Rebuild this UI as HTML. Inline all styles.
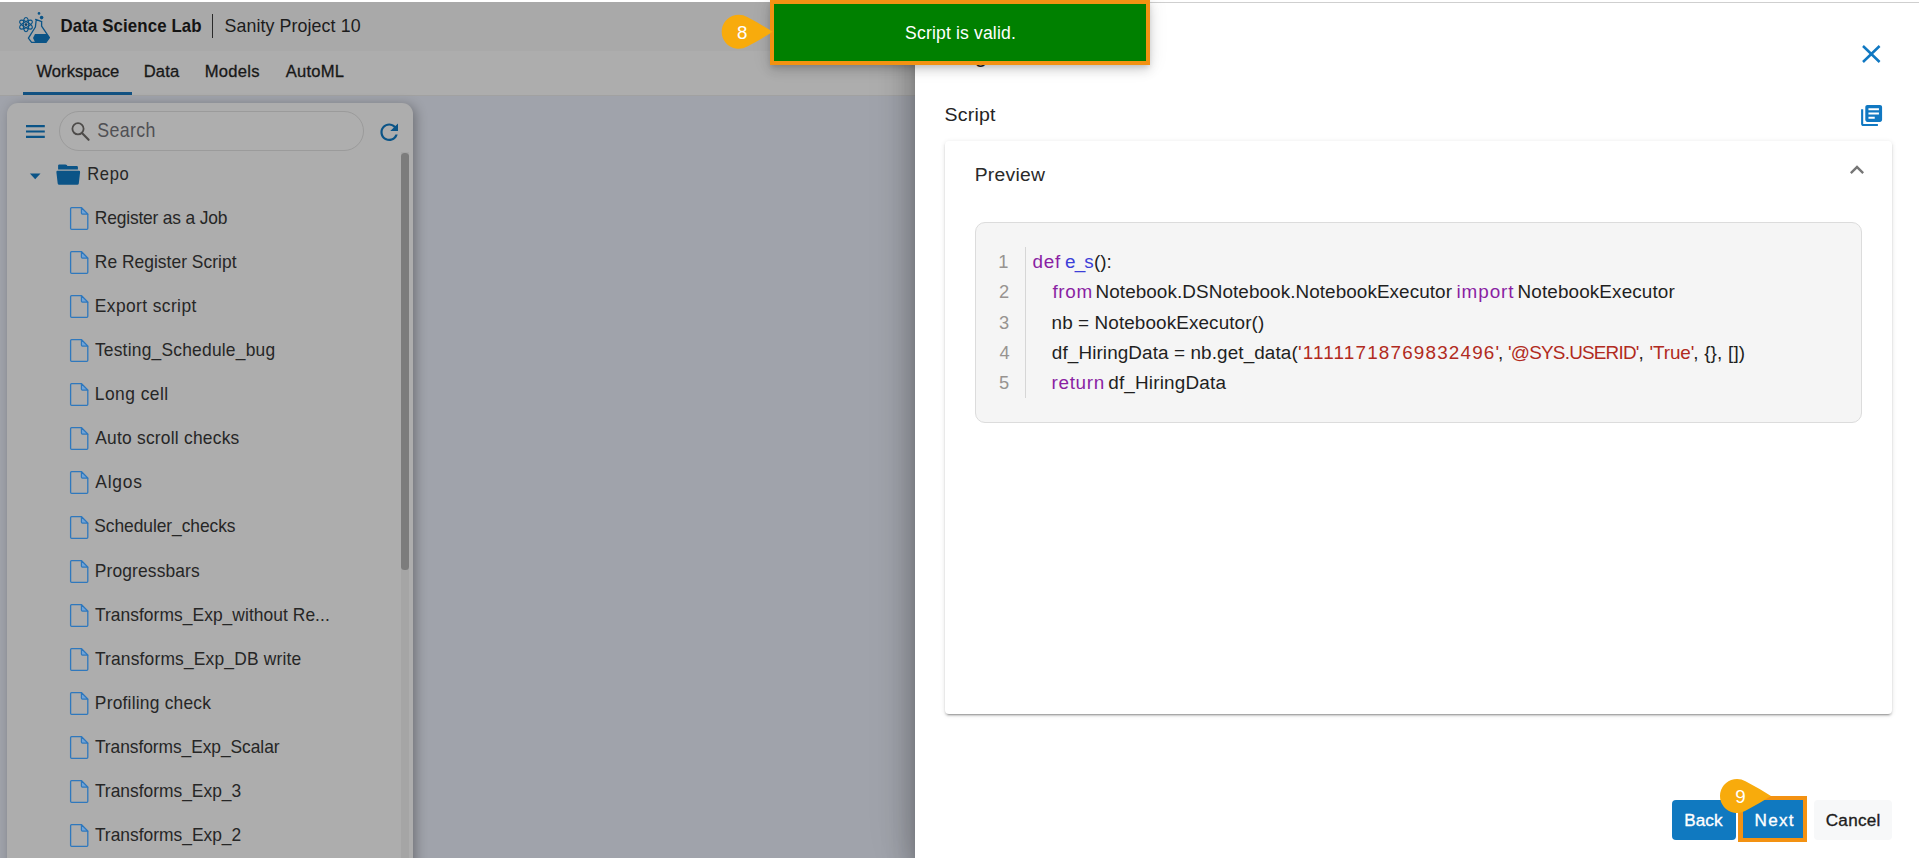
<!DOCTYPE html>
<html lang="en">
<head>
<meta charset="utf-8">
<title>Data Science Lab</title>
<style>
*{box-sizing:border-box;margin:0;padding:0}
html,body{width:1919px;height:858px;overflow:hidden;background:#9fa3ab;font-family:"Liberation Sans",Arial,sans-serif;color:#222}
.abs{position:absolute}
svg{position:absolute;overflow:visible}
.t{position:absolute;white-space:pre;line-height:1;transform-origin:0 84.7%}
.sb{-webkit-text-stroke:0.3px #181818}
.sw{-webkit-text-stroke:0.35px #fff}
.sk{-webkit-text-stroke:0.35px #1d1d1d}
#topline{left:0;top:0;width:1919px;height:2px;background:#fff}
#topline2{left:1150px;top:2px;width:769px;height:1px;background:#cfcfcf}
#hdr{left:0;top:2px;width:915px;height:49px;background:#a9a9a9}
#tabs{left:0;top:51px;width:915px;height:45px;background:#adadad;border-bottom:1px solid #a1a1a1}
#tabline{left:23px;top:92px;width:109px;height:3px;background:#125283}
#sep{left:211.5px;top:13.5px;width:1.5px;height:24px;background:#2a2a2a}
#main{left:0;top:96px;width:915px;height:762px;background:#a0a3ab}
#side{left:7px;top:103px;width:406px;height:770px;background:#adadad;border-radius:11px;box-shadow:3px 2px 12px rgba(0,0,0,.3)}
#search{left:59px;top:111px;width:305px;height:40px;border:1px solid #9b9b9b;border-radius:20px;background:#aeaeae}
#sbtrack{left:401px;top:152px;width:8px;height:706px;background:#a5a5a5}
#sbthumb{left:401px;top:152.5px;width:8px;height:417.2px;background:#7c7c7c;border-radius:3.5px}
#panel{left:915px;top:0;width:1004px;height:858px;background:#fff;box-shadow:0 8px 10px -5px rgba(0,0,0,.2),0 16px 24px 2px rgba(0,0,0,.14),0 6px 30px 5px rgba(0,0,0,.14),0 0 50px rgba(0,0,0,.1)}
#card{left:945px;top:140.6px;width:947.4px;height:573.2px;background:#fff;border-radius:4px;box-shadow:0 3px 1px -2px rgba(0,0,0,.2),0 2px 2px rgba(0,0,0,.14),0 1px 5px rgba(0,0,0,.12)}
#code{left:975px;top:222px;width:887px;height:201px;background:#f5f5f5;border:1px solid #dcdcdc;border-radius:10px}
#gut{left:1025px;top:247px;width:1px;height:151px;background:#d6d6d6}
#toastb{left:770px;top:-1px;width:380px;height:66px;background:#f39212;box-shadow:0 3px 5px -1px rgba(0,0,0,.12),0 6px 10px rgba(0,0,0,.10),0 1px 18px rgba(0,0,0,.10)}
#toastg{left:774px;top:4px;width:372px;height:57px;background:#008000}
#bback{left:1672px;top:800px;width:63.5px;height:40px;border-radius:4px;background:#1079c0}
#bnexto{left:1738px;top:796px;width:69px;height:45.5px;background:#f39212}
#bnext{left:1742.5px;top:800.3px;width:60.5px;height:37.4px;background:#1079c0}
#bcancel{left:1813.7px;top:800px;width:78.3px;height:40px;border-radius:4px;background:#f7f8f9}
</style>
</head>
<body>
<div class="abs" id="hdr"></div>
<div class="abs" id="tabs"></div>
<div class="abs" id="tabline"></div>
<div class="abs" id="sep"></div>
<div class="abs" id="main"></div>
<div class="abs" id="side"></div>
<div class="abs" id="search"></div>
<div class="abs" id="sbtrack"></div>
<div class="abs" id="sbthumb"></div>
<svg id="logo" style="left:0;top:0" width="60" height="50" viewBox="0 0 60 50">
<g fill="none" stroke="#0b5487" stroke-width="1.15">
<ellipse cx="26" cy="24.6" rx="2.7" ry="7.1"/>
<ellipse cx="26" cy="24.6" rx="2.7" ry="7.1" transform="rotate(60 26 24.6)"/>
<ellipse cx="26" cy="24.6" rx="2.7" ry="7.1" transform="rotate(-60 26 24.6)"/>
</g>
<circle cx="26" cy="24.6" r="1.4" fill="#0a3f68"/>
<circle cx="39" cy="13.4" r="1.3" fill="#0b5487"/>
<circle cx="41.6" cy="17.6" r="1.8" fill="#0b5487"/>
<path d="M35.6 19.4 L41.8 21.6 M36.2 19.8 L35.4 27 L28.4 38.2 L31.6 42.4 L46 42.4 L49.4 37.6 L41.6 26.2 L41.6 21.8" fill="none" stroke="#0b5487" stroke-width="1.3" stroke-linejoin="round" stroke-linecap="round"/>
<path d="M35 34 L47 34 L49.4 37.6 L46 42.4 L35.2 42.4 L33 38 Z" fill="#0b5487"/>
</svg>
<svg style="left:25.8px;top:125.4px" width="18.8" height="13" viewBox="0 0 18.8 13"><path d="M0 1.1h18.8M0 6.5h18.8M0 11.9h18.8" stroke="#0b5487" stroke-width="2.2" fill="none"/></svg>
<svg style="left:70px;top:121px" width="22" height="22" viewBox="0 0 22 22"><circle cx="8" cy="7.8" r="5.6" fill="none" stroke="#4d4b49" stroke-width="1.8"/><path d="M12.2 12.2L18.6 18.8" stroke="#4d4b49" stroke-width="2.1" stroke-linecap="round"/></svg>
<svg style="left:375.6px;top:119.2px" width="26.4" height="26.4" viewBox="0 0 24 24"><path fill="#0b5487" d="M17.65 6.35C16.2 4.9 14.21 4 12 4c-4.42 0-7.99 3.58-7.99 8s3.57 8 7.99 8c3.73 0 6.84-2.55 7.73-6h-2.08c-.82 2.33-3.04 4-5.65 4-3.31 0-6-2.69-6-6s2.69-6 6-6c1.66 0 3.14.69 4.22 1.78L13 11h7V4l-2.35 2.35z"/></svg>
<svg style="left:0;top:0" width="60" height="200" viewBox="0 0 60 200"><path d="M29.9 173.6H40.5L35.2 179.2Z" fill="#0b5487"/></svg>
<svg style="left:0;top:0" width="100" height="200" viewBox="0 0 100 200"><path fill="#0b5487" d="M58.1 165.6q0-1.2 1.2-1.2h6q1 0 1.5.7l.6.8h9.3q1.2 0 1.2 1.2v2.3H58.1Z"/>
<path fill="#0b5487" d="M57.6 170.8h21.3q1.4 0 1.2 1.4l-1.3 11.2q-.2 1.3-1.5 1.3H59.2q-1.3 0-1.5-1.3l-1.3-11.2q-.2-1.4 1.2-1.4Z"/></svg>
<svg style="left:70.4px;top:207.0px" width="18.5" height="23" viewBox="0 0 18.5 23"><path d="M1.6 .7H11.4L17.8 7.1V21.3q0 1-1 1H1.6q-1 0-1-1V1.7q0-1 1-1Z" fill="none" stroke="#2f78bd" stroke-width="1.3" stroke-linejoin="round"/><path d="M11.4 .7V6.1q0 1 1 1H17.8Z" fill="#6fa3d8" stroke="#2f78bd" stroke-width="1.2" stroke-linejoin="round"/></svg>
<svg style="left:70.4px;top:251.1px" width="18.5" height="23" viewBox="0 0 18.5 23"><path d="M1.6 .7H11.4L17.8 7.1V21.3q0 1-1 1H1.6q-1 0-1-1V1.7q0-1 1-1Z" fill="none" stroke="#2f78bd" stroke-width="1.3" stroke-linejoin="round"/><path d="M11.4 .7V6.1q0 1 1 1H17.8Z" fill="#6fa3d8" stroke="#2f78bd" stroke-width="1.2" stroke-linejoin="round"/></svg>
<svg style="left:70.4px;top:295.1px" width="18.5" height="23" viewBox="0 0 18.5 23"><path d="M1.6 .7H11.4L17.8 7.1V21.3q0 1-1 1H1.6q-1 0-1-1V1.7q0-1 1-1Z" fill="none" stroke="#2f78bd" stroke-width="1.3" stroke-linejoin="round"/><path d="M11.4 .7V6.1q0 1 1 1H17.8Z" fill="#6fa3d8" stroke="#2f78bd" stroke-width="1.2" stroke-linejoin="round"/></svg>
<svg style="left:70.4px;top:339.2px" width="18.5" height="23" viewBox="0 0 18.5 23"><path d="M1.6 .7H11.4L17.8 7.1V21.3q0 1-1 1H1.6q-1 0-1-1V1.7q0-1 1-1Z" fill="none" stroke="#2f78bd" stroke-width="1.3" stroke-linejoin="round"/><path d="M11.4 .7V6.1q0 1 1 1H17.8Z" fill="#6fa3d8" stroke="#2f78bd" stroke-width="1.2" stroke-linejoin="round"/></svg>
<svg style="left:70.4px;top:383.3px" width="18.5" height="23" viewBox="0 0 18.5 23"><path d="M1.6 .7H11.4L17.8 7.1V21.3q0 1-1 1H1.6q-1 0-1-1V1.7q0-1 1-1Z" fill="none" stroke="#2f78bd" stroke-width="1.3" stroke-linejoin="round"/><path d="M11.4 .7V6.1q0 1 1 1H17.8Z" fill="#6fa3d8" stroke="#2f78bd" stroke-width="1.2" stroke-linejoin="round"/></svg>
<svg style="left:70.4px;top:427.4px" width="18.5" height="23" viewBox="0 0 18.5 23"><path d="M1.6 .7H11.4L17.8 7.1V21.3q0 1-1 1H1.6q-1 0-1-1V1.7q0-1 1-1Z" fill="none" stroke="#2f78bd" stroke-width="1.3" stroke-linejoin="round"/><path d="M11.4 .7V6.1q0 1 1 1H17.8Z" fill="#6fa3d8" stroke="#2f78bd" stroke-width="1.2" stroke-linejoin="round"/></svg>
<svg style="left:70.4px;top:471.4px" width="18.5" height="23" viewBox="0 0 18.5 23"><path d="M1.6 .7H11.4L17.8 7.1V21.3q0 1-1 1H1.6q-1 0-1-1V1.7q0-1 1-1Z" fill="none" stroke="#2f78bd" stroke-width="1.3" stroke-linejoin="round"/><path d="M11.4 .7V6.1q0 1 1 1H17.8Z" fill="#6fa3d8" stroke="#2f78bd" stroke-width="1.2" stroke-linejoin="round"/></svg>
<svg style="left:70.4px;top:515.5px" width="18.5" height="23" viewBox="0 0 18.5 23"><path d="M1.6 .7H11.4L17.8 7.1V21.3q0 1-1 1H1.6q-1 0-1-1V1.7q0-1 1-1Z" fill="none" stroke="#2f78bd" stroke-width="1.3" stroke-linejoin="round"/><path d="M11.4 .7V6.1q0 1 1 1H17.8Z" fill="#6fa3d8" stroke="#2f78bd" stroke-width="1.2" stroke-linejoin="round"/></svg>
<svg style="left:70.4px;top:559.6px" width="18.5" height="23" viewBox="0 0 18.5 23"><path d="M1.6 .7H11.4L17.8 7.1V21.3q0 1-1 1H1.6q-1 0-1-1V1.7q0-1 1-1Z" fill="none" stroke="#2f78bd" stroke-width="1.3" stroke-linejoin="round"/><path d="M11.4 .7V6.1q0 1 1 1H17.8Z" fill="#6fa3d8" stroke="#2f78bd" stroke-width="1.2" stroke-linejoin="round"/></svg>
<svg style="left:70.4px;top:603.6px" width="18.5" height="23" viewBox="0 0 18.5 23"><path d="M1.6 .7H11.4L17.8 7.1V21.3q0 1-1 1H1.6q-1 0-1-1V1.7q0-1 1-1Z" fill="none" stroke="#2f78bd" stroke-width="1.3" stroke-linejoin="round"/><path d="M11.4 .7V6.1q0 1 1 1H17.8Z" fill="#6fa3d8" stroke="#2f78bd" stroke-width="1.2" stroke-linejoin="round"/></svg>
<svg style="left:70.4px;top:647.7px" width="18.5" height="23" viewBox="0 0 18.5 23"><path d="M1.6 .7H11.4L17.8 7.1V21.3q0 1-1 1H1.6q-1 0-1-1V1.7q0-1 1-1Z" fill="none" stroke="#2f78bd" stroke-width="1.3" stroke-linejoin="round"/><path d="M11.4 .7V6.1q0 1 1 1H17.8Z" fill="#6fa3d8" stroke="#2f78bd" stroke-width="1.2" stroke-linejoin="round"/></svg>
<svg style="left:70.4px;top:691.8px" width="18.5" height="23" viewBox="0 0 18.5 23"><path d="M1.6 .7H11.4L17.8 7.1V21.3q0 1-1 1H1.6q-1 0-1-1V1.7q0-1 1-1Z" fill="none" stroke="#2f78bd" stroke-width="1.3" stroke-linejoin="round"/><path d="M11.4 .7V6.1q0 1 1 1H17.8Z" fill="#6fa3d8" stroke="#2f78bd" stroke-width="1.2" stroke-linejoin="round"/></svg>
<svg style="left:70.4px;top:735.8px" width="18.5" height="23" viewBox="0 0 18.5 23"><path d="M1.6 .7H11.4L17.8 7.1V21.3q0 1-1 1H1.6q-1 0-1-1V1.7q0-1 1-1Z" fill="none" stroke="#2f78bd" stroke-width="1.3" stroke-linejoin="round"/><path d="M11.4 .7V6.1q0 1 1 1H17.8Z" fill="#6fa3d8" stroke="#2f78bd" stroke-width="1.2" stroke-linejoin="round"/></svg>
<svg style="left:70.4px;top:779.9px" width="18.5" height="23" viewBox="0 0 18.5 23"><path d="M1.6 .7H11.4L17.8 7.1V21.3q0 1-1 1H1.6q-1 0-1-1V1.7q0-1 1-1Z" fill="none" stroke="#2f78bd" stroke-width="1.3" stroke-linejoin="round"/><path d="M11.4 .7V6.1q0 1 1 1H17.8Z" fill="#6fa3d8" stroke="#2f78bd" stroke-width="1.2" stroke-linejoin="round"/></svg>
<svg style="left:70.4px;top:824.0px" width="18.5" height="23" viewBox="0 0 18.5 23"><path d="M1.6 .7H11.4L17.8 7.1V21.3q0 1-1 1H1.6q-1 0-1-1V1.7q0-1 1-1Z" fill="none" stroke="#2f78bd" stroke-width="1.3" stroke-linejoin="round"/><path d="M11.4 .7V6.1q0 1 1 1H17.8Z" fill="#6fa3d8" stroke="#2f78bd" stroke-width="1.2" stroke-linejoin="round"/></svg>
<div class="abs" id="panel"></div>
<div class="abs" id="topline"></div>
<div class="abs" id="topline2"></div>
<div class="abs" id="card"></div>
<div class="abs" id="code"></div>
<div class="abs" id="gut"></div>
<div class="abs" id="bback"></div>
<div class="abs" id="bnexto"></div>
<div class="abs" id="bnext"></div>
<div class="abs" id="bcancel"></div>
<div class="t " id="title" style="left:945.00px;top:42.52px;font-size:23.00px;font-weight:normal;color:#222;letter-spacing:0.000px;transform:scaleY(1.0111)">Register</div>
<div class="abs" id="toastb"></div>
<div class="abs" id="toastg"></div>
<svg style="left:1862.4px;top:45px" width="18.6" height="18" viewBox="0 0 18.6 18"><path d="M1 1L17.6 17M17.6 1L1 17" stroke="#1078c2" stroke-width="2.5" fill="none"/></svg>
<svg style="left:1858.9px;top:102.9px" width="25.2" height="25.2" viewBox="0 0 24 24"><path fill="#1078c2" d="M4 6H2v14c0 1.1.9 2 2 2h14v-2H4V6zm16-4H8c-1.1 0-2 .9-2 2v12c0 1.1.9 2 2 2h12c1.1 0 2-.9 2-2V4c0-1.1-.9-2-2-2zm-1 9H9V9h10v2zm-4 4H9v-2h6v2zm4-8H9V5h10v2z"/></svg>
<svg style="left:1843px;top:155.7px" width="28" height="28" viewBox="0 0 24 24"><path fill="#767676" d="M12 8l-6 6 1.41 1.41L12 10.83l4.59 4.58L18 14z"/></svg>
<svg style="left:0;top:0" width="1919" height="858" viewBox="0 0 1919 858"><path fill="#f8ab0c" d="M747.20 17.08 A17 17 0 1 0 747.20 46.52 Q761.65 38.94 772.70 31.80 Q761.65 24.66 747.20 17.08 Z"/></svg>
<svg style="left:0;top:0" width="1919" height="858" viewBox="0 0 1919 858"><path fill="#f8ab0c" d="M1745.50 781.28 A17 17 0 1 0 1745.50 810.72 Q1759.95 803.14 1771.00 796.00 Q1759.95 788.86 1745.50 781.28 Z"/></svg>
<div class="t " id="h1" style="left:60.43px;top:19.13px;font-size:16.85px;font-weight:bold;color:#141414;letter-spacing:0.115px;transform:scaleY(1.1298)">Data Science Lab</div>
<div class="t " id="h2" style="left:224.50px;top:17.59px;font-size:17.81px;font-weight:normal;color:#1c1c1c;letter-spacing:0.095px;transform:scaleY(1.0689)">Sanity Project 10</div>
<div class="t sb" id="tb1" style="left:36.50px;top:63.94px;font-size:16.58px;font-weight:normal;color:#181818;letter-spacing:0.015px;transform:scaleY(0.9545)">Workspace</div>
<div class="t sb" id="tb2" style="left:143.65px;top:63.94px;font-size:16.58px;font-weight:normal;color:#181818;letter-spacing:0.193px;transform:scaleY(0.9545)">Data</div>
<div class="t sb" id="tb3" style="left:204.65px;top:63.94px;font-size:16.58px;font-weight:normal;color:#181818;letter-spacing:0.296px;transform:scaleY(0.9545)">Models</div>
<div class="t sb" id="tb4" style="left:285.80px;top:63.94px;font-size:16.58px;font-weight:normal;color:#181818;letter-spacing:0.211px;transform:scaleY(0.9545)">AutoML</div>
<div class="t " id="srch" style="left:97.15px;top:123.23px;font-size:17.77px;font-weight:normal;color:#505054;letter-spacing:0.402px;transform:scaleY(1.0889)">Search</div>
<div class="t " id="repo" style="left:87.23px;top:166.54px;font-size:16.57px;font-weight:normal;color:#262626;letter-spacing:0.644px;transform:scaleY(1.1231)">Repo</div>
<div class="t " id="r0" style="left:94.82px;top:210.16px;font-size:17.40px;font-weight:normal;color:#262626;letter-spacing:-0.170px;transform:scaleY(1.0690)">Register as a Job</div>
<div class="t " id="r1" style="left:94.82px;top:254.30px;font-size:17.40px;font-weight:normal;color:#262626;letter-spacing:0.033px;transform:scaleY(1.0690)">Re Register Script</div>
<div class="t " id="r2" style="left:94.82px;top:298.44px;font-size:17.40px;font-weight:normal;color:#262626;letter-spacing:0.403px;transform:scaleY(1.0690)">Export script</div>
<div class="t " id="r3" style="left:94.89px;top:341.79px;font-size:17.40px;font-weight:normal;color:#262626;letter-spacing:0.225px;transform:scaleY(1.0690)">Testing_Schedule_bug</div>
<div class="t " id="r4" style="left:94.82px;top:386.00px;font-size:17.40px;font-weight:normal;color:#262626;letter-spacing:0.467px;transform:scaleY(1.0690)">Long cell</div>
<div class="t " id="r5" style="left:95.20px;top:429.51px;font-size:17.40px;font-weight:normal;color:#262626;letter-spacing:0.231px;transform:scaleY(1.0690)">Auto scroll checks</div>
<div class="t " id="r6" style="left:95.20px;top:473.58px;font-size:17.40px;font-weight:normal;color:#262626;letter-spacing:0.840px;transform:scaleY(1.0690)">Algos</div>
<div class="t " id="r7" style="left:94.33px;top:517.65px;font-size:17.40px;font-weight:normal;color:#262626;letter-spacing:-0.062px;transform:scaleY(1.0690)">Scheduler_checks</div>
<div class="t " id="r8" style="left:94.82px;top:562.84px;font-size:17.40px;font-weight:normal;color:#262626;letter-spacing:0.134px;transform:scaleY(1.0690)">Progressbars</div>
<div class="t " id="r9" style="left:94.89px;top:607.05px;font-size:17.40px;font-weight:normal;color:#262626;letter-spacing:0.059px;transform:scaleY(1.0690)">Transforms_Exp_without Re...</div>
<div class="t " id="r10" style="left:94.89px;top:650.56px;font-size:17.40px;font-weight:normal;color:#262626;letter-spacing:0.181px;transform:scaleY(1.0690)">Transforms_Exp_DB write</div>
<div class="t " id="r11" style="left:94.82px;top:694.70px;font-size:17.40px;font-weight:normal;color:#262626;letter-spacing:0.218px;transform:scaleY(1.0690)">Profiling check</div>
<div class="t " id="r12" style="left:94.89px;top:738.84px;font-size:17.40px;font-weight:normal;color:#262626;letter-spacing:-0.060px;transform:scaleY(1.0690)">Transforms_Exp_Scalar</div>
<div class="t " id="r13" style="left:94.89px;top:782.98px;font-size:17.40px;font-weight:normal;color:#262626;letter-spacing:0.001px;transform:scaleY(1.0690)">Transforms_Exp_3</div>
<div class="t " id="r14" style="left:94.89px;top:827.12px;font-size:17.40px;font-weight:normal;color:#262626;letter-spacing:0.005px;transform:scaleY(1.0690)">Transforms_Exp_2</div>
<div class="t " id="toast" style="left:905.12px;top:24.81px;font-size:17.57px;font-weight:normal;color:#fff;letter-spacing:0.155px;transform:scaleY(1.0669)">Script is valid.</div>
<div class="t " id="b8" style="left:736.96px;top:23.68px;font-size:18.75px;font-weight:normal;color:#fff;letter-spacing:0.000px;transform:scaleY(1.0000)">8</div>
<div class="t " id="b9" style="left:1735.15px;top:787.98px;font-size:18.75px;font-weight:normal;color:#fff;letter-spacing:0.000px;transform:scaleY(1.0000)">9</div>
<div class="t " id="script" style="left:944.62px;top:105.47px;font-size:19.53px;font-weight:normal;color:#242424;letter-spacing:0.193px;transform:scaleY(0.9675)">Script</div>
<div class="t " id="preview" style="left:974.72px;top:164.86px;font-size:19.32px;font-weight:normal;color:#2a2a2a;letter-spacing:0.272px;transform:scaleY(0.9587)">Preview</div>
<div class="t " id="ln0" style="left:998.21px;top:252.59px;font-size:18.31px;font-weight:normal;color:#979390;letter-spacing:0.000px;transform:scaleY(1.0000)">1</div>
<div class="t " id="ln1" style="left:998.99px;top:282.79px;font-size:18.31px;font-weight:normal;color:#979390;letter-spacing:0.000px;transform:scaleY(1.0000)">2</div>
<div class="t " id="ln2" style="left:999.01px;top:313.54px;font-size:18.31px;font-weight:normal;color:#979390;letter-spacing:0.000px;transform:scaleY(1.0000)">3</div>
<div class="t " id="ln3" style="left:999.60px;top:343.94px;font-size:18.31px;font-weight:normal;color:#979390;letter-spacing:0.000px;transform:scaleY(1.0000)">4</div>
<div class="t " id="ln4" style="left:998.99px;top:374.34px;font-size:18.31px;font-weight:normal;color:#979390;letter-spacing:0.000px;transform:scaleY(1.0000)">5</div>
<div class="t " id="c1a" style="left:1032.62px;top:253.22px;font-size:18.90px;font-weight:normal;color:#8a1fa3;letter-spacing:0.683px;transform:scaleY(0.9405)">def</div>
<div class="t " id="c1b" style="left:1064.94px;top:253.22px;font-size:18.90px;font-weight:normal;color:#3d3fd8;letter-spacing:-0.797px;transform:scaleY(0.9405)">e_s</div>
<div class="t " id="c1c" style="left:1093.97px;top:253.22px;font-size:18.90px;font-weight:normal;color:#1f1f1f;letter-spacing:-0.083px;transform:scaleY(0.9405)">():</div>
<div class="t " id="c2a" style="left:1052.50px;top:282.95px;font-size:18.90px;font-weight:normal;color:#8a1fa3;letter-spacing:0.623px;transform:scaleY(0.9405)">from</div>
<div class="t " id="c2b" style="left:1095.53px;top:282.95px;font-size:18.90px;font-weight:normal;color:#1f1f1f;letter-spacing:0.074px;transform:scaleY(0.9405)">Notebook.DSNotebook.NotebookExecutor</div>
<div class="t " id="c2c" style="left:1456.49px;top:282.95px;font-size:18.90px;font-weight:normal;color:#8a1fa3;letter-spacing:0.918px;transform:scaleY(0.9405)">import</div>
<div class="t " id="c2d" style="left:1517.53px;top:282.95px;font-size:18.90px;font-weight:normal;color:#1f1f1f;letter-spacing:0.124px;transform:scaleY(0.9405)">NotebookExecutor</div>
<div class="t " id="c3a" style="left:1051.54px;top:314.02px;font-size:18.90px;font-weight:normal;color:#1f1f1f;letter-spacing:0.100px;transform:scaleY(0.9405)">nb = NotebookExecutor()</div>
<div class="t " id="c4a" style="left:1051.84px;top:344.15px;font-size:18.90px;font-weight:normal;color:#1f1f1f;letter-spacing:0.103px;transform:scaleY(0.9405)">df_HiringData = nb.get_data(</div>
<div class="t " id="c4b" style="left:1298.00px;top:344.15px;font-size:18.90px;font-weight:normal;color:#b12a20;letter-spacing:1.163px;transform:scaleY(0.9405)">'11111718769832496'</div>
<div class="t " id="c4c" style="left:1497.94px;top:344.15px;font-size:18.90px;font-weight:normal;color:#1f1f1f;letter-spacing:0.000px;transform:scaleY(0.9405)">,</div>
<div class="t " id="c4d" style="left:1508.01px;top:344.10px;font-size:18.90px;font-weight:normal;color:#b12a20;letter-spacing:-0.784px;transform:scaleY(0.9286)">'@SYS.USERID'</div>
<div class="t " id="c4e" style="left:1638.45px;top:344.15px;font-size:18.90px;font-weight:normal;color:#1f1f1f;letter-spacing:0.000px;transform:scaleY(0.9405)">,</div>
<div class="t " id="c4f" style="left:1649.43px;top:344.15px;font-size:18.90px;font-weight:normal;color:#b12a20;letter-spacing:-0.075px;transform:scaleY(0.9399)">'True'</div>
<div class="t " id="c4g" style="left:1693.29px;top:344.15px;font-size:18.90px;font-weight:normal;color:#1f1f1f;letter-spacing:0.177px;transform:scaleY(0.9405)">, {}, [])</div>
<div class="t " id="c5a" style="left:1051.52px;top:373.82px;font-size:18.90px;font-weight:normal;color:#8a1fa3;letter-spacing:0.686px;transform:scaleY(0.9405)">return</div>
<div class="t " id="c5b" style="left:1108.22px;top:373.82px;font-size:18.90px;font-weight:normal;color:#1f1f1f;letter-spacing:0.181px;transform:scaleY(0.9405)">df_HiringData</div>
<div class="t sw" id="tback" style="left:1684.37px;top:812.09px;font-size:17.13px;font-weight:normal;color:#fff;letter-spacing:0.042px;transform:scaleY(1.0026)">Back</div>
<div class="t sw" id="tnext" style="left:1754.59px;top:812.09px;font-size:17.13px;font-weight:normal;color:#fff;letter-spacing:1.213px;transform:scaleY(1.0026)">Next</div>
<div class="t sk" id="tcancel" style="left:1825.71px;top:812.09px;font-size:17.13px;font-weight:normal;color:#1d1d1d;letter-spacing:0.293px;transform:scaleY(1.0026)">Cancel</div>
</body>
</html>
